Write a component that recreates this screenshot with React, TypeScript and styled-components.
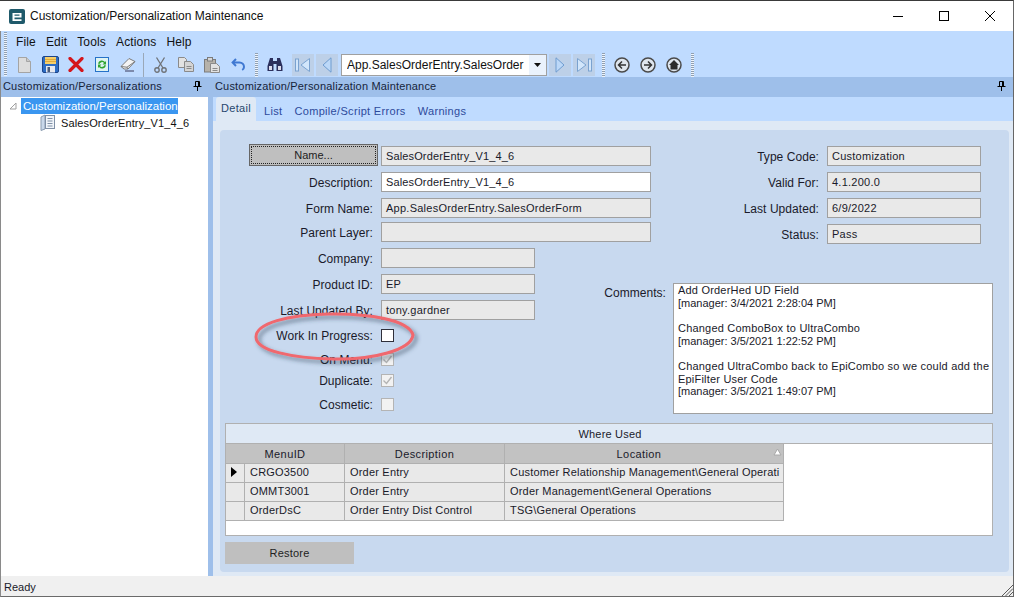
import React from "react";
import styled, { createGlobalStyle } from "styled-components";

const Global = createGlobalStyle`
  html, body {
    margin: 0;
    padding: 0;
    background: #fff;
  }
  * {
    box-sizing: border-box;
  }
`;

const Window = styled.div`
  position: relative;
  width: 1014px;
  height: 597px;
  overflow: hidden;
  display: flex;
  flex-direction: column;
  font-family: "Liberation Sans", Arial, sans-serif;
  font-size: 12px;
  color: #1a1a2a;
  border-top: 1px solid #3a3a3a;
  border-right: 1px solid #666;
  background: #f0f0f0;
`;

const TitleBar = styled.div`
  height: 30px;
  display: flex;
  align-items: center;
  background: #fff;
  padding-left: 9px;
`;

const TitleText = styled.div`
  margin-left: 5px;
  font-size: 12px;
  color: #111;
  flex: 1;
`;

const WinButton = styled.div`
  width: 46px;
  height: 30px;
  display: flex;
  align-items: center;
  justify-content: center;
`;

const CommandBar = styled.div`
  height: 46px;
  background: #bfdbff;
  display: flex;
  align-items: center;
  border-left: 1px solid #8a8a8a;
  padding-left: 3px;
`;

const CommandRows = styled.div`
  flex: 1;
  height: 46px;
  display: flex;
  flex-direction: column;
`;

const MenuRow = styled.div`
  height: 21px;
  display: flex;
  align-items: center;
  padding: 0 0 0 9px;
  gap: 10px;
  font-size: 12px;
  letter-spacing: 0.15px;
  color: #111;
`;

const ToolRow = styled.div`
  height: 25px;
  display: flex;
  align-items: center;
  padding-left: 4px;
`;

const Grip = styled.div<{ $h?: number }>`
  width: 3px;
  height: ${(p) => p.$h ?? 24}px;
  flex: none;
  background: repeating-linear-gradient(to bottom, #8f9fb2 0 1px, #eef4fb 1px 2px);
`;

const ToolIcon = styled.div<{ $w?: number; $off?: boolean }>`
  width: ${(p) => p.$w ?? 26}px;
  height: 22px;
  flex: none;
  display: flex;
  align-items: center;
  justify-content: center;
  background: ${(p) => (p.$off ? "#bdd0e8" : "transparent")};
`;

const ToolGap = styled.div<{ $w: number }>`
  width: ${(p) => p.$w}px;
  flex: none;
`;

const Separator = styled.div`
  width: 1px;
  height: 24px;
  flex: none;
  background: #9aa8b8;
  margin: 0 3px 0 2px;
`;

const FormSelect = styled.div`
  width: 206px;
  height: 22px;
  flex: none;
  background: #fff;
  border: 1px solid #a0a0a0;
  display: flex;
  align-items: center;
  font-size: 12px;
  color: #111;
  padding-left: 5px;
`;

const SelectValue = styled.div`
  flex: 1;
  overflow: hidden;
  white-space: nowrap;
`;

const SelectArrow = styled.div`
  width: 17px;
  height: 20px;
  background: #eaf2fc;
  display: flex;
  align-items: center;
  justify-content: center;
  flex: none;
`;

const Body = styled.div`
  flex: 1;
  display: flex;
  background: #9ebfea;
  min-height: 0;
`;

const LeftPane = styled.div`
  width: 208px;
  display: flex;
  flex-direction: column;
  border-left: 1px solid #8a8a8a;
`;

const PaneHeader = styled.div<{ $pr: number }>`
  height: 18px;
  flex: none;
  background: #9ebfea;
  display: flex;
  align-items: center;
  justify-content: space-between;
  padding: 0 ${(p) => p.$pr}px 0 2px;
  font-size: 11px;
  letter-spacing: 0.18px;
  color: #16243a;
`;

const Tree = styled.div`
  flex: 1;
  background: #fff;
  margin: 2px 0 0 0;
  padding-top: 1px;
`;

const TreeRoot = styled.div`
  display: flex;
  align-items: center;
  height: 16px;
  padding-left: 8px;
  gap: 4px;
`;

const TreeRootLabel = styled.div`
  background: #3a96f0;
  color: #fff;
  height: 16px;
  line-height: 16px;
  padding: 0 0 0 2px;
  width: 157px;
  font-size: 11.5px;
  white-space: nowrap;
`;

const TreeChild = styled.div`
  display: flex;
  align-items: center;
  height: 17px;
  padding-left: 39px;
  gap: 5px;
  font-size: 11px;
  letter-spacing: 0.13px;
  color: #111;
`;

const MainPane = styled.div`
  margin-left: 5px;
  flex: 1;
  display: flex;
  flex-direction: column;
`;

const TabStrip = styled.div`
  margin-top: 2px;
  height: 24px;
  flex: none;
  background: #bfdbff;
  display: flex;
  align-items: flex-end;
  padding-left: 3px;
`;

const Tab = styled.div<{ $active?: boolean }>`
  height: ${(p) => (p.$active ? 24 : 21)}px;
  padding: ${(p) => (p.$active ? "0 5px 3px" : "0 6px")};
  margin-right: ${(p) => (p.$active ? 2 : 0)}px;
  display: flex;
  align-items: center;
  font-size: 11px;
  letter-spacing: 0.32px;
  color: ${(p) => (p.$active ? "#26476e" : "#2d4a9c")};
  background: ${(p) => (p.$active ? "#dfe9f5" : "transparent")};
  border-radius: 3px 3px 0 0;
`;

const TabBody = styled.div`
  flex: 1;
  background: #dfe9f5;
  padding: 9px 4px 4px 7px;
  min-height: 0;
`;

const Panel = styled.div`
  height: 100%;
  background: #c8d9ef;
  border-radius: 4px;
  padding: 14px 16px 0 5px;
  display: flex;
  flex-direction: column;
`;

const Upper = styled.div`
  height: 279px;
  flex: none;
  display: flex;
`;

const LeftFields = styled.div`
  width: 426px;
  flex: none;
  display: flex;
  flex-direction: column;
`;

const RightFields = styled.div`
  flex: 1;
  display: flex;
  flex-direction: column;
`;

const FieldRow = styled.div<{ $gap?: number; $h?: number }>`
  display: flex;
  align-items: center;
  height: ${(p) => p.$h ?? 20}px;
  margin-top: ${(p) => p.$gap ?? 6}px;
  flex: none;
`;

const Label = styled.div<{ $w: number }>`
  width: ${(p) => p.$w}px;
  flex: none;
  text-align: right;
  font-size: 12px;
  letter-spacing: 0.05px;
  padding: 1px 8px 0 0;
  white-space: nowrap;
  color: #1a1a2a;
`;

const NameButton = styled.div`
  width: 129px;
  height: 22px;
  margin: -2px 3px 0 24px;
  flex: none;
  background: #bfbfbf;
  border: 1px solid #666;
  padding: 1px;
  font-size: 11px;
  color: #222;
`;

const NameFocus = styled.div`
  width: 100%;
  height: 100%;
  border: 1px dotted #222;
  display: flex;
  align-items: center;
  justify-content: center;
`;

const TextBox = styled.div<{ $w: number; $on?: boolean; $tight?: boolean }>`
  width: ${(p) => p.$w}px;
  height: 20px;
  flex: none;
  border: 1px solid #a0a0a0;
  background: ${(p) => (p.$on ? "#fff" : "#e9e9e9")};
  padding-left: 4px;
  display: flex;
  align-items: center;
  font-size: 11px;
  letter-spacing: ${(p) => (p.$tight ? 0.13 : 0.25)}px;
  white-space: nowrap;
  overflow: hidden;
  color: #1a1a2a;
`;

const CheckBox = styled.div<{ $on?: boolean }>`
  width: 13px;
  height: 13px;
  flex: none;
  border: 1px solid ${(p) => (p.$on ? "#2f2f3a" : "#b4b4b4")};
  background: ${(p) => (p.$on ? "#fff" : "#f2f2f2")};
  display: flex;
  align-items: center;
  justify-content: center;
`;

const CommentsRow = styled.div`
  display: flex;
  margin: 39px 0 0 -60px;
`;

const CommentsLabel = styled.div`
  width: 75px;
  flex: none;
  text-align: right;
  font-size: 12px;
  letter-spacing: 0.05px;
  padding-top: 3px;
  white-space: nowrap;
  margin-right: 7px;
`;

const CommentsBox = styled.div`
  width: 320px;
  height: 131px;
  background: #fff;
  border: 1px solid #a0a0a0;
  padding: 0 0 0 4px;
  font-size: 11px;
  line-height: 12.67px;
  overflow: hidden;
  color: #1a1a2a;
`;

const CommentLine = styled.div<{ $stamp?: boolean }>`
  height: 12.67px;
  white-space: nowrap;
  letter-spacing: ${(p) => (p.$stamp ? 0 : 0.2)}px;
`;

const Grid = styled.div`
  width: 768px;
  height: 113px;
  flex: none;
  border: 1px solid #b0b0b0;
  background: #fff;
  display: flex;
  flex-direction: column;
  font-size: 11px;
`;

const GridCaption = styled.div`
  height: 20px;
  background: #dfe9f5;
  border-bottom: 1px solid #b0b0b0;
  display: flex;
  align-items: center;
  justify-content: center;
  letter-spacing: 0.2px;
  padding-left: 2px;
  color: #1a1a2a;
`;

const GridRow = styled.div<{ $head?: boolean }>`
  display: flex;
  width: 558px;
  height: ${(p) => (p.$head ? 20 : 19)}px;
  flex: none;
  border-bottom: 1px solid #b0b0b0;
  background: ${(p) => (p.$head ? "#c2c2c2" : "#e9e9e9")};
`;

const HeadCell = styled.div<{ $w: number; $pr?: number }>`
  width: ${(p) => p.$w}px;
  flex: none;
  position: relative;
  border-right: 1px solid #b0b0b0;
  padding-right: ${(p) => p.$pr ?? 0}px;
  display: flex;
  align-items: center;
  justify-content: center;
  white-space: nowrap;
  letter-spacing: 0.4px;
  color: #1a1a2a;
`;

const Cell = styled.div<{ $w: number }>`
  width: ${(p) => p.$w}px;
  flex: none;
  border-right: 1px solid #b0b0b0;
  padding: 0 0 2px 5px;
  display: flex;
  align-items: center;
  white-space: nowrap;
  overflow: hidden;
  letter-spacing: 0.2px;
  color: #1a1a2a;
`;

const SortMark = styled.svg`
  position: absolute;
  right: 1px;
  top: 4px;
`;

const RestoreRow = styled.div`
  margin-top: 6px;
  flex: none;
`;

const RestoreButton = styled.div`
  width: 129px;
  height: 22px;
  background: #bfbfbf;
  display: flex;
  align-items: center;
  justify-content: center;
  font-size: 11px;
  letter-spacing: 0.2px;
  color: #222;
`;

const StatusBar = styled.div`
  height: 21px;
  flex: none;
  background: #f0f0f0;
  border-left: 1px solid #8a8a8a;
  border-bottom: 1px solid #6a6a6a;
  padding: 1px 0 0 3px;
  display: flex;
  align-items: center;
  font-size: 11px;
  color: #1a1a2a;
`;

const ResizeGrip = styled.svg`
  position: absolute;
  right: 0;
  bottom: 1px;
`;

const Annotation = styled.svg`
  position: absolute;
  left: 248px;
  top: 305px;
  pointer-events: none;
`;

const Pin = () => (
  <svg width="9" height="10" viewBox="0 0 9 10">
    <path d="M2.5 .5h4v5h-4zM.5 5.5h8M4.5 5.5V10M5.500 1v4" fill="none" stroke="#000" strokeWidth="1" />
  </svg>
);

const Check = () => (
  <svg width="11" height="11" viewBox="0 0 11 11">
    <path d="M1.5 5.5l3 3 5-6.5" fill="none" stroke="#b4b4b4" strokeWidth="1.4" />
  </svg>
);

const Icons = {
  logo: (
    <svg width="16" height="15" viewBox="0 0 16 15">
      <rect width="16" height="15" rx="2" fill="#1f5a6b" />
      <path d="M3.500 4h9v4.400h-7v1.800h7V12h-9z M5.500 5.600v1.200h5V5.600z" fill="#fff" fillRule="evenodd" />
    </svg>
  ),
  page: (
    <svg width="15" height="18" viewBox="0 0 15 18">
      <path d="M1.500 1.500h8l4 4v11h-12z" fill="#dcdcdc" stroke="#a4a4a4" />
      <path d="M9.500 1.500v4h4" fill="#c8c8c8" stroke="#a4a4a4" />
    </svg>
  ),
  save: (
    <svg width="17" height="17" viewBox="0 0 17 17">
      <rect x=".5" y=".5" width="16" height="16" rx="1.500" fill="#2c6cc4" stroke="#1d4488" />
      <rect x="3" y="1" width="11" height="7" fill="#f6cf6a" />
      <path d="M3 3.500h11M3 5.500h11" stroke="#e0a93a" />
      <rect x="4" y="10" width="9" height="6.500" fill="#e6e9ef" />
      <rect x="5.500" y="11" width="2.500" height="5" fill="#4a5a78" />
    </svg>
  ),
  del: (
    <svg width="16" height="15" viewBox="0 0 16 15">
      <path d="M2 1.500l12 12M14 1.500l-12 12" stroke="#d4161c" strokeWidth="3.200" strokeLinecap="round" />
    </svg>
  ),
  refresh: (
    <svg width="14" height="15" viewBox="0 0 14 15">
      <rect x=".5" y=".5" width="13" height="14" fill="#dff3f2" stroke="#2672c8" />
      <path d="M3 6.500a4 4 0 0 1 7-1.500l1-1v3.500H7.500L9 6a2.600 2.600 0 0 0-4.500 1z" fill="#2fa52f" />
      <path d="M11 8.500A4 4 0 0 1 4 10l-1 1V7.500h3.500L5 9a2.600 2.600 0 0 0 4.500-1z" fill="#2fa52f" />
    </svg>
  ),
  eraser: (
    <svg width="16" height="15" viewBox="0 0 16 15">
      <path d="M1 9.500l8-8 6 3-7 7.500H4z" fill="#f4f4f4" stroke="#7a7a7a" />
      <path d="M1 9.500l6 .7 1 1.800M7 10.200l8-5.700" fill="none" stroke="#7a7a7a" />
      <path d="M5 14h9" stroke="#3a3a5a" />
    </svg>
  ),
  cut: (
    <svg width="13" height="16" viewBox="0 0 13 16">
      <path d="M2.500 .5L9 11M10.500 .5L4 11" stroke="#6f7378" strokeWidth="1.300" fill="none" />
      <circle cx="3" cy="13" r="2.200" fill="none" stroke="#6f7378" strokeWidth="1.400" />
      <circle cx="10" cy="13" r="2.200" fill="none" stroke="#6f7378" strokeWidth="1.400" />
    </svg>
  ),
  copy: (
    <svg width="16" height="15" viewBox="0 0 16 15">
      <path d="M.5.5h6l2 2v8h-8z" fill="#e2e2e2" stroke="#8a8a8a" />
      <path d="M6.500 4.500h6l3 3v7h-9z" fill="#d4d4d4" stroke="#8a8a8a" />
      <path d="M8.500 9.500h5M8.500 11.500h5" stroke="#8a8a8a" />
    </svg>
  ),
  paste: (
    <svg width="16" height="16" viewBox="0 0 16 16">
      <rect x=".5" y="2.500" width="11" height="12.500" fill="#b6b2aa" stroke="#7c7c7c" />
      <rect x="3.500" y=".5" width="5" height="3.500" fill="#d6d6d6" stroke="#7c7c7c" />
      <path d="M6.500 6.500h6l3 3v6h-9z" fill="#e2e2e2" stroke="#8a8a8a" />
      <path d="M8.500 11.500h5M8.500 13.500h5" stroke="#8a8a8a" />
    </svg>
  ),
  undo: (
    <svg width="15" height="13" viewBox="0 0 15 13">
      <path d="M5 1L1.600 4.500 5 8" fill="none" stroke="#3f78d2" strokeWidth="2" />
      <path d="M2.200 4.500H8.500a4.500 4.500 0 0 1 4.500 4.500c0 1.300-.8 2.400-1.800 3" fill="none" stroke="#3f78d2" strokeWidth="2" />
    </svg>
  ),
  binoc: (
    <svg width="16" height="15" viewBox="0 0 16 15">
      <path d="M3 1h3v3h4V1h3l2.500 8v5h-6V7H6.500v7h-6V9z" fill="#2b2f5c" />
      <rect x="2" y="9" width="3" height="4" fill="#dcdcec" />
      <rect x="11" y="9" width="3" height="4" fill="#dcdcec" />
    </svg>
  ),
  back: (
    <svg width="16" height="16" viewBox="0 0 16 16">
      <circle cx="8" cy="8" r="7" fill="#dfe6ee" stroke="#4a4a4a" strokeWidth="1.500" />
      <path d="M12 8H4.500M8 4.500L4.500 8 8 11.500" fill="none" stroke="#333" strokeWidth="1.500" />
    </svg>
  ),
  fwd: (
    <svg width="16" height="16" viewBox="0 0 16 16">
      <circle cx="8" cy="8" r="7" fill="#dfe6ee" stroke="#4a4a4a" strokeWidth="1.500" />
      <path d="M4 8h7.500M8 4.500L11.500 8 8 11.500" fill="none" stroke="#333" strokeWidth="1.500" />
    </svg>
  ),
  home: (
    <svg width="16" height="16" viewBox="0 0 16 16">
      <circle cx="8" cy="8" r="7" fill="#dfe6ee" stroke="#4a4a4a" strokeWidth="1.500" />
      <path d="M8 3L3 8h1.500v4.500h7V8H13z" fill="#2c2c2c" />
    </svg>
  ),
  first: (
    <svg width="16" height="14" viewBox="0 0 16 14">
      <rect x=".5" y="1" width="3" height="12" fill="#d2e6fb" stroke="#7aa2d0" />
      <path d="M14.500 .5v13L6 7z" fill="#d2e6fb" stroke="#7aa2d0" />
    </svg>
  ),
  prev: (
    <svg width="10" height="16" viewBox="0 0 10 16">
      <path d="M9 .8v14.400L1 8z" fill="#bcd8f8" stroke="#6f9ccf" />
    </svg>
  ),
  next: (
    <svg width="10" height="16" viewBox="0 0 10 16">
      <path d="M1 .8v14.400L9 8z" fill="#bcd8f8" stroke="#6f9ccf" />
    </svg>
  ),
  last: (
    <svg width="16" height="14" viewBox="0 0 16 14">
      <path d="M1.500 .5v13L10 7z" fill="#d2e6fb" stroke="#7aa2d0" />
      <rect x="12.500" y="1" width="3" height="12" fill="#d2e6fb" stroke="#7aa2d0" />
    </svg>
  ),
  customization: (
    <svg width="16" height="17" viewBox="0 0 16 17">
      <path d="M1 3l4-2v14l-4 1.500z" fill="#c9d8ea" stroke="#8a9bb0" />
      <rect x="5.500" y="1.500" width="9" height="13" fill="#f1f5fa" stroke="#7f90a6" />
      <path d="M7.500 4.500h5M7.500 7h5M7.500 9.500h5M7.500 12h5" stroke="#7f90a6" />
    </svg>
  ),
};

const fieldsLeft = [
  { label: "Description:", value: "SalesOrderEntry_V1_4_6", w: 270, on: true, tight: true, gap: 6 },
  { label: "Form Name:", value: "App.SalesOrderEntry.SalesOrderForm", w: 270, gap: 6 },
  { label: "Parent Layer:", value: "", w: 270, gap: 4 },
  { label: "Company:", value: "", w: 154, gap: 6 },
  { label: "Product ID:", value: "EP", w: 154, gap: 6 },
  { label: "Last Updated By:", value: "tony.gardner", w: 154, gap: 6 },
];

const fieldsRight = [
  { label: "Type Code:", value: "Customization", gap: 2 },
  { label: "Valid For:", value: "4.1.200.0", gap: 6 },
  { label: "Last Updated:", value: "6/9/2022", gap: 6 },
  { label: "Status:", value: "Pass", gap: 6 },
];

const checks = [
  { label: "Work In Progress:", on: true, checked: false, gap: 9 },
  { label: "On Menu:", checked: true, gap: 11 },
  { label: "Duplicate:", checked: true, gap: 8 },
  { label: "Cosmetic:", checked: false, gap: 11 },
];

const rows = [
  { id: "CRGO3500", desc: "Order Entry", loc: "Customer Relationship Management\\General Operati" },
  { id: "OMMT3001", desc: "Order Entry", loc: "Order Management\\General Operations" },
  { id: "OrderDsC", desc: "Order Entry Dist Control", loc: "TSG\\General Operations" },
];

const comments = [
  "Add OrderHed UD Field",
  "[manager: 3/4/2021 2:28:04 PM]",
  "",
  "Changed ComboBox to UltraCombo",
  "[manager: 3/5/2021 1:22:52 PM]",
  "",
  "Changed UltraCombo back to EpiCombo so we could add the",
  "EpiFilter User Code",
  "[manager: 3/5/2021 1:49:07 PM]",
];

const App = () => {
  return (
    <Window>
      <Global />
      <TitleBar>
        {Icons.logo}
        <TitleText>Customization/Personalization Maintenance</TitleText>
        <WinButton>
          <svg width="10" height="10" viewBox="0 0 10 10"><path d="M0 5.500h10" stroke="#000" /></svg>
        </WinButton>
        <WinButton>
          <svg width="10" height="10" viewBox="0 0 10 10"><rect x=".5" y=".5" width="9" height="9" fill="none" stroke="#000" /></svg>
        </WinButton>
        <WinButton>
          <svg width="10" height="10" viewBox="0 0 10 10"><path d="M0 0l10 10M10 0L0 10" stroke="#000" /></svg>
        </WinButton>
      </TitleBar>

      <CommandBar>
        <Grip $h={44} />
        <CommandRows>
          <MenuRow>
            <span>File</span>
            <span>Edit</span>
            <span>Tools</span>
            <span>Actions</span>
            <span>Help</span>
          </MenuRow>
          <ToolRow>
            <ToolIcon>{Icons.page}</ToolIcon>
            <ToolIcon>{Icons.save}</ToolIcon>
            <ToolIcon>{Icons.del}</ToolIcon>
            <ToolIcon>{Icons.refresh}</ToolIcon>
            <ToolIcon>{Icons.eraser}</ToolIcon>
            <Separator />
            <ToolIcon>{Icons.cut}</ToolIcon>
            <ToolIcon>{Icons.copy}</ToolIcon>
            <ToolIcon>{Icons.paste}</ToolIcon>
            <ToolIcon>{Icons.undo}</ToolIcon>
            <ToolGap $w={4} />
            <Grip />
            <ToolGap $w={4} />
            <ToolIcon>{Icons.binoc}</ToolIcon>
            <ToolGap $w={4} />
            <ToolIcon $w={22} $off>{Icons.first}</ToolIcon>
            <ToolGap $w={2} />
            <ToolIcon $w={22} $off>{Icons.prev}</ToolIcon>
            <ToolGap $w={3} />
            <FormSelect>
              <SelectValue>App.SalesOrderEntry.SalesOrder</SelectValue>
              <SelectArrow>
                <svg width="7" height="4" viewBox="0 0 7 4"><path d="M0 0h7L3.500 4z" fill="#111" /></svg>
              </SelectArrow>
            </FormSelect>
            <ToolGap $w={2} />
            <ToolIcon $w={22} $off>{Icons.next}</ToolIcon>
            <ToolGap $w={2} />
            <ToolIcon $w={22} $off>{Icons.last}</ToolIcon>
            <ToolGap $w={7} />
            <Grip />
            <ToolGap $w={4} />
            <ToolIcon>{Icons.back}</ToolIcon>
            <ToolIcon>{Icons.fwd}</ToolIcon>
            <ToolIcon>{Icons.home}</ToolIcon>
            <ToolGap $w={4} />
            <Grip />
          </ToolRow>
        </CommandRows>
      </CommandBar>

      <Body>
        <LeftPane>
          <PaneHeader $pr={6}>
            <span>Customization/Personalizations</span>
            <Pin />
          </PaneHeader>
          <Tree>
            <TreeRoot>
              <svg width="8" height="8" viewBox="0 0 8 8"><path d="M7 1v6H1z" fill="none" stroke="#a0a0a0" /></svg>
              <TreeRootLabel>Customization/Personalization</TreeRootLabel>
            </TreeRoot>
            <TreeChild>
              {Icons.customization}
              <span>SalesOrderEntry_V1_4_6</span>
            </TreeChild>
          </Tree>
        </LeftPane>

        <MainPane>
          <PaneHeader $pr={7}>
            <span>Customization/Personalization Maintenance</span>
            <Pin />
          </PaneHeader>
          <TabStrip>
            <Tab $active>Detail</Tab>
            <Tab>List</Tab>
            <Tab>Compile/Script Errors</Tab>
            <Tab>Warnings</Tab>
          </TabStrip>
          <TabBody>
            <Panel>
              <Upper>
                <LeftFields>
                  <FieldRow $gap={2}>
                    <NameButton><NameFocus>Name...</NameFocus></NameButton>
                    <TextBox $w={270} $tight>SalesOrderEntry_V1_4_6</TextBox>
                  </FieldRow>
                  {fieldsLeft.map((f) => (
                    <FieldRow key={f.label} $gap={f.gap}>
                      <Label $w={156}>{f.label}</Label>
                      <TextBox $w={f.w} $on={f.on} $tight={f.tight}>{f.value}</TextBox>
                    </FieldRow>
                  ))}
                  {checks.map((c) => (
                    <FieldRow key={c.label} $gap={c.gap} $h={13}>
                      <Label $w={156}>{c.label}</Label>
                      <CheckBox $on={c.on}>{c.checked && <Check />}</CheckBox>
                    </FieldRow>
                  ))}
                </LeftFields>
                <RightFields>
                  {fieldsRight.map((f) => (
                    <FieldRow key={f.label} $gap={f.gap}>
                      <Label $w={176}>{f.label}</Label>
                      <TextBox $w={154}>{f.value}</TextBox>
                    </FieldRow>
                  ))}
                  <CommentsRow>
                    <CommentsLabel>Comments:</CommentsLabel>
                    <CommentsBox>
                      {comments.map((line, i) => (
                        <CommentLine key={i} $stamp={line.startsWith("[")}>{line}</CommentLine>
                      ))}
                    </CommentsBox>
                  </CommentsRow>
                </RightFields>
              </Upper>
              <Grid>
                <GridCaption>Where Used</GridCaption>
                <GridRow $head>
                  <HeadCell $w={119}>MenuID</HeadCell>
                  <HeadCell $w={160}>Description</HeadCell>
                  <HeadCell $w={279} $pr={10}>
                    Location
                    <SortMark width="9" height="8" viewBox="0 0 9 8">
                      <path d="M4.500 1L8 7H1z" fill="#fff" stroke="#a8a8a8" />
                    </SortMark>
                  </HeadCell>
                </GridRow>
                {rows.map((r, i) => (
                  <GridRow key={r.id}>
                    <Cell $w={19}>
                      {i === 0 && (
                        <svg width="6" height="10" viewBox="0 0 6 10"><path d="M0 0l6 5-6 5z" fill="#000" /></svg>
                      )}
                    </Cell>
                    <Cell $w={100}>{r.id}</Cell>
                    <Cell $w={160}>{r.desc}</Cell>
                    <Cell $w={279}>{r.loc}</Cell>
                  </GridRow>
                ))}
              </Grid>
              <RestoreRow>
                <RestoreButton>Restore</RestoreButton>
              </RestoreRow>
            </Panel>
          </TabBody>
        </MainPane>
      </Body>

      <StatusBar>Ready</StatusBar>

      <ResizeGrip width="12" height="12" viewBox="0 0 12 12">
        <path d="M12 1L1 12M12 4.500L4.500 12M12 8L8 12" stroke="#5a5a5a" />
      </ResizeGrip>

      <Annotation width="180" height="66" viewBox="0 0 180 66">
        <defs>
          <filter id="ringShadow" x="-10%" y="-20%" width="125%" height="150%">
            <feDropShadow dx="3" dy="3" stdDeviation="2.200" floodColor="#2f3f55" floodOpacity="0.6" />
          </filter>
        </defs>
        <path
          d="M165 29C161 14 120 7 80 8 40 9 8 17 8 31c0 14 37 21 77 22 40 1 78-9 80-24z"
          fill="none"
          stroke="#f0686e"
          strokeWidth="3"
          filter="url(#ringShadow)"
        />
      </Annotation>
    </Window>
  );
};

export default App;
